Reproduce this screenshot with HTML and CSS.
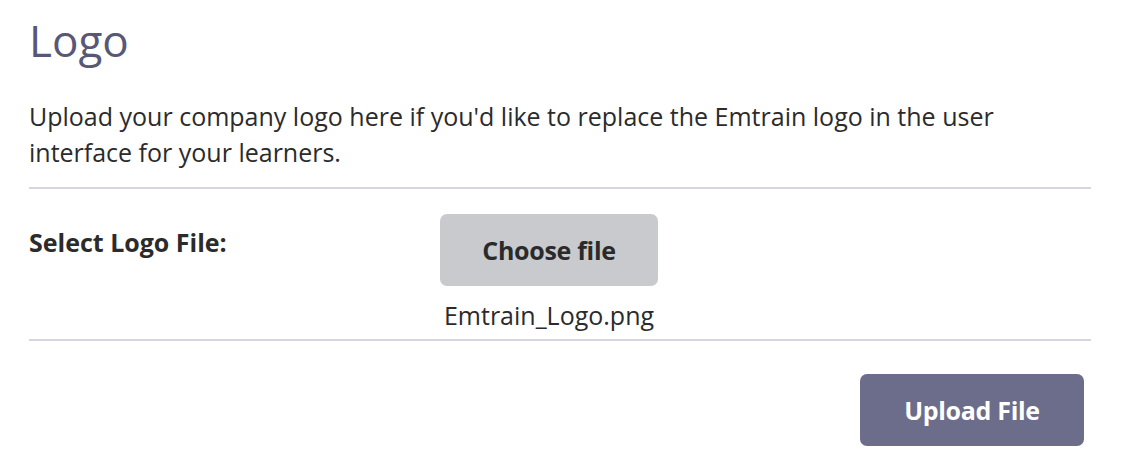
FILE: index.html
```html
<!DOCTYPE html>
<html lang="en">
<head>
    <meta charset="UTF-8">
    <meta name="viewport" content="width=device-width, initial-scale=1.0">
    <link rel="stylesheet" href="styles.css">
    <title>Logo Settings</title>
</head>
<body>
    <section class="logo-settings">
        <h1 class="title">Logo</h1>
        <div class="intro">
            <p>Upload your company logo here if you'd like to replace the Emtrain logo in the user interface for your learners.</p>
        </div>

        <div class="field-row">
            <label class="field-label" for="logoFile">Select Logo File:</label>
            <div class="file-picker">
                <button class="choose-btn" type="button" id="logoFile">Choose file</button>
                <span class="file-name">Emtrain_Logo.png</span>
            </div>
        </div>

        <div class="actions">
            <button class="upload-btn" type="button">Upload File</button>
        </div>
    </section>
</body>
</html>
```

FILE: styles.css
```css
body {
    margin: 0;
    background: #fff;
    font-family: "Open Sans", "Lato", sans-serif;
    color: #2b2b2b;
}

.logo-settings {
    width: 1062px;
    padding: 0 0 0 29px;
}

.title {
    margin: 0;
    padding-top: 12px;
    font-size: 44px;
    font-weight: 400;
    line-height: 56px;
    color: #575878;
}

.intro {
    margin-top: 30px;
    padding-bottom: 17px;
    border-bottom: 2px solid #d6d6e2;
}

.intro p {
    margin: 0;
    max-width: 1040px;
    font-size: 25px;
    line-height: 36px;
}

.field-row {
    display: flex;
    align-items: flex-start;
    padding-top: 25px;
    padding-bottom: 7px;
    border-bottom: 2px solid #d6d6e2;
}

.field-label {
    width: 411px;
    padding-top: 11px;
    font-size: 25px;
    font-weight: 700;
}

.file-picker {
    display: flex;
    flex-direction: column;
    align-items: center;
    width: 218px;
}

.choose-btn {
    width: 218px;
    height: 72px;
    border: none;
    border-radius: 7px;
    background: #c9cacd;
    color: #2a2a2a;
    font-family: inherit;
    font-size: 25px;
    font-weight: 700;
    letter-spacing: -0.3px;
    cursor: pointer;
}

.file-name {
    margin-top: 12px;
    font-size: 25px;
    line-height: 34px;
}

.actions {
    display: flex;
    justify-content: flex-end;
    padding: 33px 7px 0 0;
}

.upload-btn {
    width: 224px;
    height: 72px;
    border: none;
    border-radius: 7px;
    background: #6b6d8b;
    color: #fff;
    font-family: inherit;
    font-size: 25px;
    font-weight: 700;
    letter-spacing: -0.3px;
    cursor: pointer;
}
```
